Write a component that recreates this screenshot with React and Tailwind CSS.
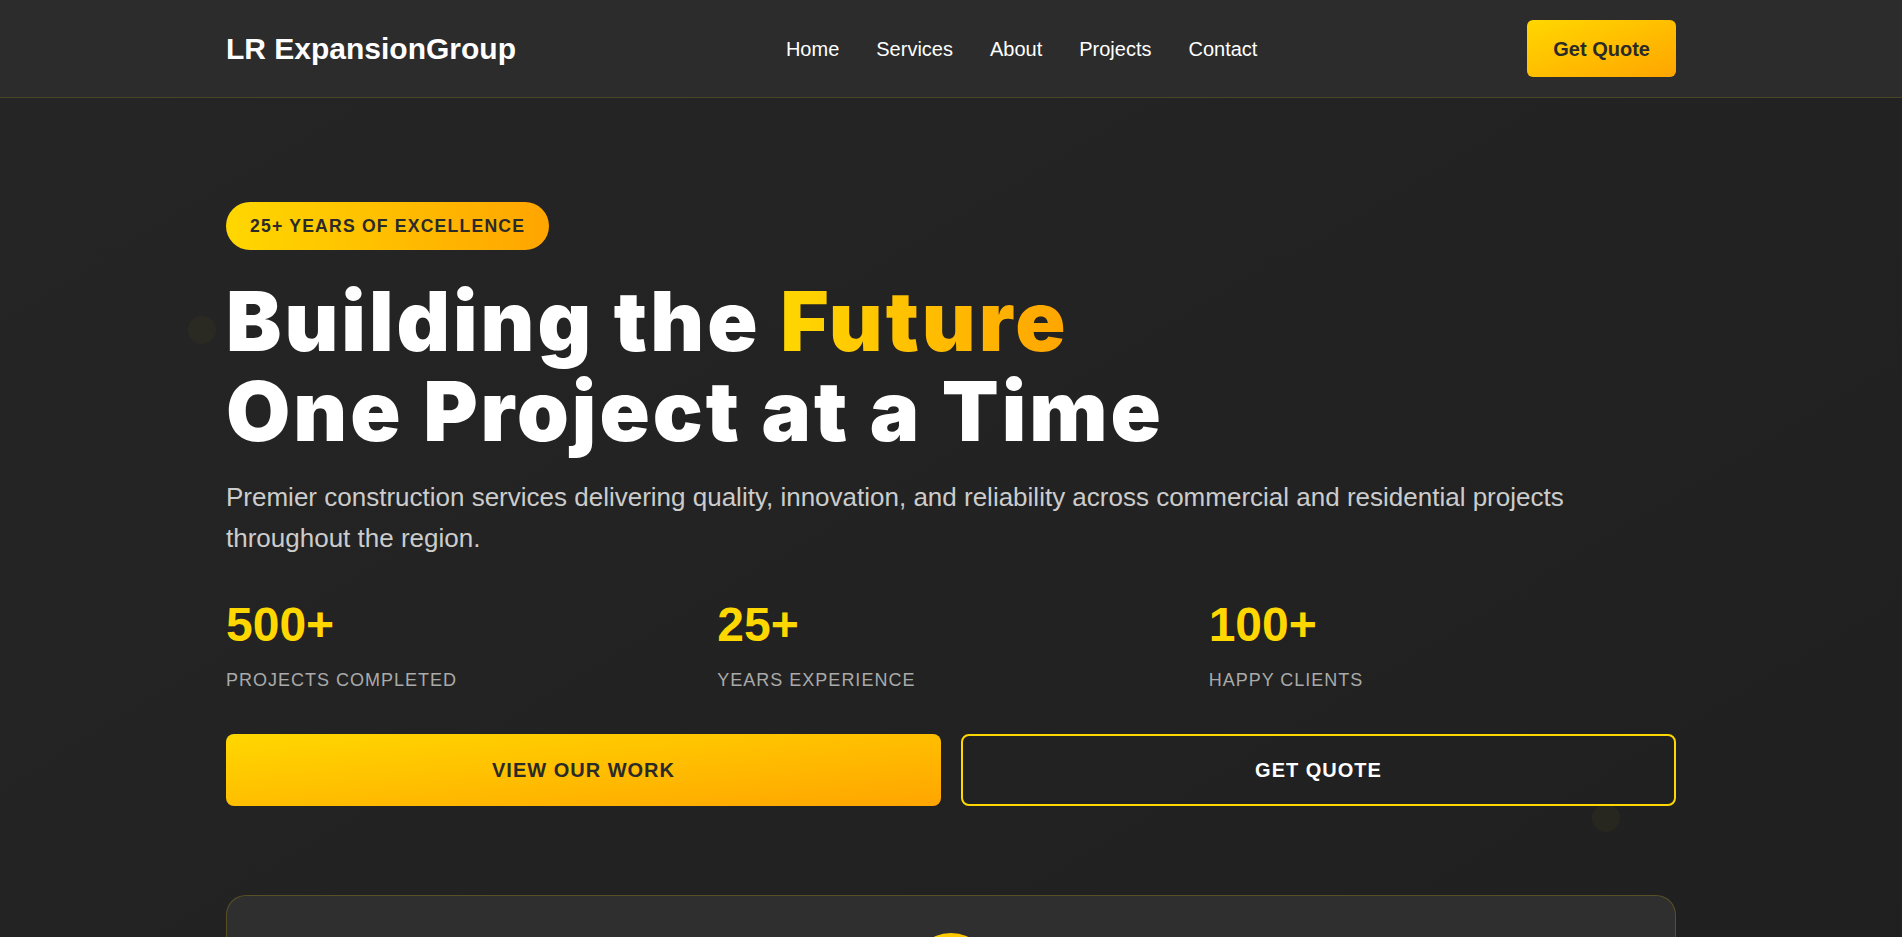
import React from 'react';

const navLinks = ['Home', 'Services', 'About', 'Projects', 'Contact'];

const stats = [
  { value: '500+', label: 'Projects Completed' },
  { value: '25+', label: 'Years Experience' },
  { value: '100+', label: 'Happy Clients' },
];

export default function App() {
  return (
    <div className="min-h-screen bg-[#222222] font-['Liberation_Sans',Arial,sans-serif] overflow-hidden">
      {/* Header */}
      <header className="h-[98px] bg-[#2c2c2c] border-b border-[#FFD700]/15">
        <div className="max-w-[1450px] mx-auto h-full flex items-center justify-between">
          <a href="#" className="text-[30px] font-bold text-white">LR ExpansionGroup</a>
          <nav className="flex items-center gap-[37px]">
            {navLinks.map(link => (
              <a key={link} href="#" className="text-[20px] text-white">{link}</a>
            ))}
          </nav>
          <button className="px-[26px] h-[57px] rounded-md bg-gradient-to-br from-[#FFD700] to-[#FFA500] text-[20px] font-bold text-[#2a2a2a]">
            Get Quote
          </button>
        </div>
      </header>

      {/* Hero */}
      <section className="relative bg-gradient-to-br from-[#252525] to-[#1f1f1f] pb-20">
        <span className="absolute left-[188px] top-[218px] w-7 h-7 rounded-full bg-[#FFD700]/[0.03]" />
        <span className="absolute left-[1592px] top-[706px] w-7 h-7 rounded-full bg-[#FFD700]/[0.03]" />

        <div className="relative max-w-[1450px] mx-auto pt-[104px]">
          <div className="inline-flex items-center h-[48px] px-6 rounded-full bg-gradient-to-r from-[#FFD700] to-[#FFA500] text-[17.6px] font-bold tracking-[1.2px] uppercase text-[#2a2a2a]">
            25+ Years of Excellence
          </div>

          <h1 className="mt-[26px] font-['Inter',sans-serif] font-black text-[83px] leading-[90px] tracking-[3px] text-white">
            Building the{' '}
            <span className="bg-gradient-to-r from-[#FFD700] to-[#FFA500] bg-clip-text text-transparent">Future</span>
            <br />
            One Project at a Time
          </h1>

          <p className="mt-[21px] text-[26px] leading-[41px] text-[#cccccc]">
            Premier construction services delivering quality, innovation, and reliability across commercial and residential projects throughout the region.
          </p>

          <div className="mt-[42px] grid grid-cols-3 gap-6">
            {stats.map(s => (
              <div key={s.value}>
                <div className="text-5xl font-bold text-[#FFD700]">{s.value}</div>
                <div className="mt-[18px] text-[18px] tracking-[1px] uppercase text-[#aaaaaa]">{s.label}</div>
              </div>
            ))}
          </div>

          <div className="mt-10 grid grid-cols-2 gap-5">
            <button className="h-[72px] rounded-lg bg-gradient-to-br from-[#FFD700] to-[#FFA500] text-[20px] font-bold tracking-[1px] uppercase text-[#2a2a2a]">
              View Our Work
            </button>
            <button className="h-[72px] rounded-lg border-2 border-[#FFD700] text-[20px] font-bold tracking-[1px] uppercase text-white">
              Get Quote
            </button>
          </div>

          {/* Feature card */}
          <div className="mt-[89px] rounded-[20px] border border-[#FFD700]/20 bg-[#2f2f2f] pt-[37px] pb-10 px-10 flex flex-col items-center">
            <div className="w-20 h-20 rounded-full bg-gradient-to-br from-[#FFD700] to-[#FFA500] flex items-center justify-center">
              <svg width="36" height="36" viewBox="0 0 24 24" fill="none" stroke="#2a2a2a" strokeWidth="2" strokeLinecap="round" strokeLinejoin="round">
                <path d="M3 21h18M5 21V7l7-4 7 4v14M9 21v-6h6v6" />
              </svg>
            </div>
            <h3 className="mt-6 text-[28px] font-bold text-white">Quality Construction</h3>
            <p className="mt-3 text-[18px] text-[#aaaaaa]">Built to last with premium materials and expert craftsmanship.</p>
          </div>
        </div>
      </section>
    </div>
  );
}
